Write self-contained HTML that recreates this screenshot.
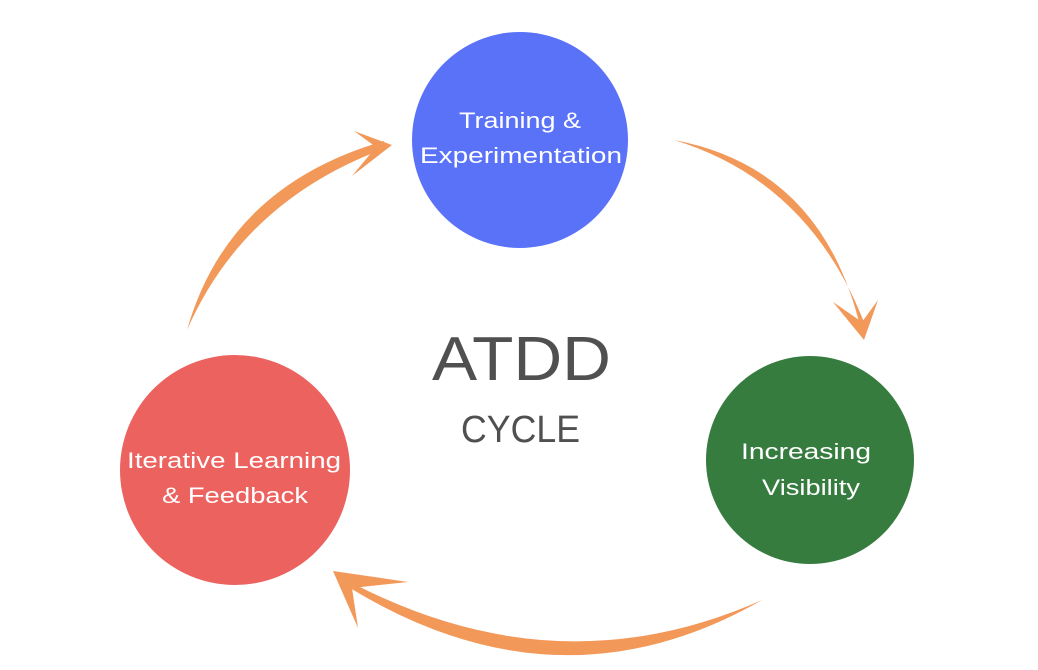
<!DOCTYPE html>
<html><head><meta charset="utf-8"><style>html,body{margin:0;padding:0;background:#fff}svg{display:block}</style></head>
<body>
<svg width="1038" height="670" viewBox="0 0 1038 670" xmlns="http://www.w3.org/2000/svg" font-family="Liberation Sans, sans-serif">
<rect width="1038" height="670" fill="#fff"/>
<circle cx="520" cy="140" r="108" fill="#5a72f8"/>
<circle cx="810" cy="460" r="104" fill="#367c3f"/>
<circle cx="235" cy="470" r="115" fill="#ec625f"/>
<g fill="#f2995a">
<path d="M187,330 Q228,186 384,141 L386,148 Q244,200 187,330 Z"/>
<path d="M354,131 L392,145 L352,176 L376,147 Z"/>
<path d="M674,140 Q823,168 861,330 L867,330 Q812,182 674,140 Z"/>
<path d="M833,302 L864,340 L878,300 L862,322 Z"/>
<path d="M762,600 Q560,716 350,588 L354,584 Q560,690 762,600 Z"/>
<path d="M408,582 L333,571 L358,628 L352,588 Z"/>
</g>
<g fill="#fff" font-size="22">
<text x="459" y="128" textLength="122" lengthAdjust="spacingAndGlyphs">Training &amp;</text>
<text x="420" y="163" textLength="202" lengthAdjust="spacingAndGlyphs">Experimentation</text>
<text x="127" y="468" textLength="214" lengthAdjust="spacingAndGlyphs">Iterative Learning</text>
<text x="162" y="503" textLength="146" lengthAdjust="spacingAndGlyphs">&amp; Feedback</text>
<text x="741" y="459" textLength="130" lengthAdjust="spacingAndGlyphs">Increasing</text>
<text x="762" y="495" textLength="98" lengthAdjust="spacingAndGlyphs">Visibility</text>
</g>
<text x="432" y="380" font-size="62" fill="#505050" textLength="179" lengthAdjust="spacingAndGlyphs">ATDD</text>
<text x="461" y="442" font-size="38" fill="#505050" textLength="119" lengthAdjust="spacingAndGlyphs">CYCLE</text>
</svg>
</body></html>
